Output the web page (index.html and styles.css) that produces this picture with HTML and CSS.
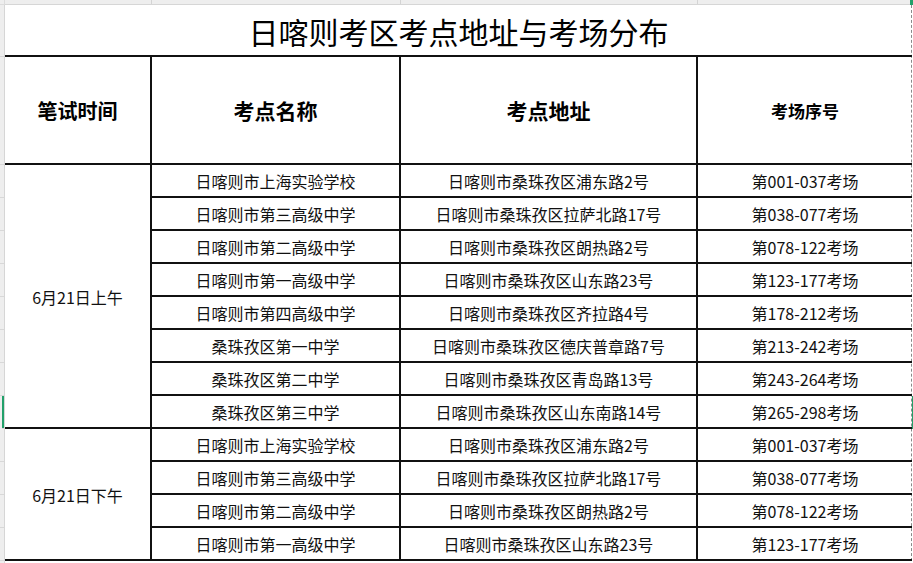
FILE: index.html
```html
<!DOCTYPE html>
<html lang="zh-CN">
<head>
<meta charset="utf-8">
<title>日喀则考区考点地址与考场分布</title>
<link rel="stylesheet" href="styles.css">
</head>
<body>
<div class="app">
  <div class="corner"></div>
  <div class="colbar">
    <span class="cb c1"></span><span class="cb c2"></span><span class="cb c3"></span><span class="cb c4"></span>
  </div>
  <div class="rowbar">
    <span class="rb title-h"></span><span class="rb head-h"></span>
    <span class="rb"></span><span class="rb"></span><span class="rb"></span><span class="rb"></span>
    <span class="rb"></span><span class="rb"></span><span class="rb"></span><span class="rb sel"></span>
    <span class="rb"></span><span class="rb"></span><span class="rb"></span><span class="rb"></span>
  </div>
  <div class="sheet">
    <div class="cell title">日喀则考区考点地址与考场分布</div>

    <div class="cell head h1">笔试时间</div>
    <div class="cell head h2">考点名称</div>
    <div class="cell head h2">考点地址</div>
    <div class="cell head h4 last">考场序号</div>

    <div class="cell time am">6月21日上午</div>
    <div class="cell">日喀则市上海实验学校</div>
    <div class="cell">日喀则市桑珠孜区浦东路2号</div>
    <div class="cell last">第001-037考场</div>

    <div class="cell">日喀则市第三高级中学</div>
    <div class="cell">日喀则市桑珠孜区拉萨北路17号</div>
    <div class="cell last">第038-077考场</div>

    <div class="cell">日喀则市第二高级中学</div>
    <div class="cell">日喀则市桑珠孜区朗热路2号</div>
    <div class="cell last">第078-122考场</div>

    <div class="cell">日喀则市第一高级中学</div>
    <div class="cell">日喀则市桑珠孜区山东路23号</div>
    <div class="cell last">第123-177考场</div>

    <div class="cell">日喀则市第四高级中学</div>
    <div class="cell">日喀则市桑珠孜区齐拉路4号</div>
    <div class="cell last">第178-212考场</div>

    <div class="cell">桑珠孜区第一中学</div>
    <div class="cell">日喀则市桑珠孜区德庆普章路7号</div>
    <div class="cell last">第213-242考场</div>

    <div class="cell">桑珠孜区第二中学</div>
    <div class="cell">日喀则市桑珠孜区青岛路13号</div>
    <div class="cell last">第243-264考场</div>

    <div class="cell">桑珠孜区第三中学</div>
    <div class="cell">日喀则市桑珠孜区山东南路14号</div>
    <div class="cell last sel-end">第265-298考场</div>

    <div class="cell time pm">6月21日下午</div>
    <div class="cell">日喀则市上海实验学校</div>
    <div class="cell">日喀则市桑珠孜区浦东路2号</div>
    <div class="cell last">第001-037考场</div>

    <div class="cell">日喀则市第三高级中学</div>
    <div class="cell">日喀则市桑珠孜区拉萨北路17号</div>
    <div class="cell last">第038-077考场</div>

    <div class="cell">日喀则市第二高级中学</div>
    <div class="cell">日喀则市桑珠孜区朗热路2号</div>
    <div class="cell last">第078-122考场</div>

    <div class="cell">日喀则市第一高级中学</div>
    <div class="cell">日喀则市桑珠孜区山东路23号</div>
    <div class="cell last">第123-177考场</div>
  </div>
</div>
</body>
</html>
```

FILE: styles.css
```css
html, body {
  margin: 0;
  padding: 0;
  background: #ffffff;
}

body {
  font-family: "Noto Sans CJK SC", "Noto Sans", sans-serif;
  color: #000;
  width: 913px;
  height: 563px;
  overflow: hidden;
}

.app {
  display: grid;
  grid-template-columns: 5px 907px 1px;
  grid-template-rows: 5px auto;
  position: relative;
}

.corner {
  background: #eeeeee;
  border-right: 1px solid #dcdcdc;
  border-bottom: 1px solid #dcdcdc;
  box-sizing: border-box;
}

.colbar {
  grid-column: 2 / 4;
  background: #eeeeee;
  border-bottom: 1px solid #d6d6d6;
  box-sizing: border-box;
  display: grid;
  grid-template-columns: 147px 249px 297px 214px 1px;
  position: relative;
}

.colbar .cb {
  border-right: 1px solid #d4d4d4;
}

.colbar::after {
  content: "";
  position: absolute;
  right: 0;
  top: 0;
  width: 3px;
  height: 5px;
  background: #21a06a;
}

.rowbar {
  background: #eeeeee;
  border-right: 1px solid #d6d6d6;
  box-sizing: border-box;
  display: grid;
  grid-template-rows: 52px 108px repeat(12, 33px) 10px;
}

.rowbar .rb {
  border-bottom: 1px solid #d8d8d8;
}

.rowbar .sel {
  background: #21a06a;
  margin-left: 2px;
}

.sheet {
  display: grid;
  grid-template-columns: 147px 249px 297px 214px;
  grid-template-rows: 52px 108px repeat(12, 33px);
  border-right: 1px dashed #8a8a8a;
  position: relative;
}

.cell {
  box-sizing: border-box;
  border-right: 2px solid #111;
  border-bottom: 2px solid #111;
  display: flex;
  align-items: center;
  justify-content: center;
  font-size: 16px;
  line-height: 1;
  padding-top: 1px;
  white-space: nowrap;
  color: #111;
}

.cell.last {
  border-right: none;
}

.title {
  grid-column: 1 / 5;
  border-right: none;
  font-size: 30px;
  font-weight: 400;
  padding-top: 2px;
  color: #000;
}

.head {
  font-weight: 700;
  color: #000;
}

.h1 {
  font-size: 20px;
}

.h2 {
  font-size: 21px;
}

.h4 {
  font-size: 17px;
}

.time.am {
  grid-row: 3 / 11;
}

.time.pm {
  grid-row: 11 / 15;
}

.sel-end {
  position: relative;
}

.sel-end::after {
  content: "";
  position: absolute;
  right: -3px;
  top: 0;
  bottom: -2px;
  width: 3px;
  background: #21a06a;
}
```
